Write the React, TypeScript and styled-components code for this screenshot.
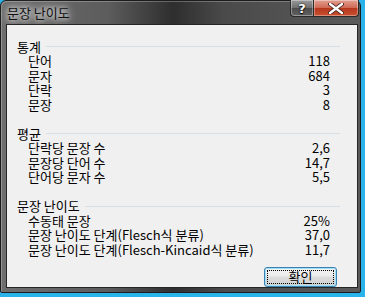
import { createGlobalStyle } from "styled-components";
import styled from "styled-components";

const GlobalStyle = createGlobalStyle`
  html, body {
    margin: 0;
    padding: 0;
    background: #2ab3ea;
    overflow: hidden;
  }
  body {
    font-family: "Noto Sans CJK KR", "Noto Sans", sans-serif;
    font-size: 13px;
  }
`;

type Row = { label: string; value: string };
type Section = { title: string; rows: Row[] };

const sections: Section[] = [
  {
    title: "통계",
    rows: [
      { label: "단어", value: "118" },
      { label: "문자", value: "684" },
      { label: "단락", value: "3" },
      { label: "문장", value: "8" },
    ],
  },
  {
    title: "평균",
    rows: [
      { label: "단락당 문장 수", value: "2,6" },
      { label: "문장당 단어 수", value: "14,7" },
      { label: "단어당 문자 수", value: "5,5" },
    ],
  },
  {
    title: "문장 난이도",
    rows: [
      { label: "수동태 문장", value: "25%" },
      { label: "문장 난이도 단계(Flesch식 분류)", value: "37,0" },
      { label: "문장 난이도 단계(Flesch-Kincaid식 분류)", value: "11,7" },
    ],
  },
];

const App = () => {
  return (
    <>
      <GlobalStyle />
      <Window>
        <TitleBar>
          <Title>문장 난이도</Title>
          <Controls>
            <HelpButton>?</HelpButton>
            <CloseButton>
              <svg width="16" height="11" viewBox="0 0 16 11">
                <path
                  d="M2 1 L14 10 M14 1 L2 10"
                  stroke="#3a1a12"
                  strokeWidth="4"
                  strokeLinecap="round"
                />
                <path
                  d="M2 1 L14 10 M14 1 L2 10"
                  stroke="#ffffff"
                  strokeWidth="2.4"
                  strokeLinecap="round"
                />
              </svg>
            </CloseButton>
          </Controls>
        </TitleBar>
        <Client>
          {sections.map((s, i) => (
            <Group key={s.title} $last={i === sections.length - 1}>
              <Header>
                <span>{s.title}</span>
                <HeaderLine />
              </Header>
              {s.rows.map((r) => (
                <StatRow key={r.label}>
                  <span>{r.label}</span>
                  <span>{r.value}</span>
                </StatRow>
              ))}
            </Group>
          ))}
          <Footer>
            <OkButton>
              <Focus>확인</Focus>
            </OkButton>
          </Footer>
        </Client>
      </Window>
    </>
  );
};

const Window = styled.div`
  width: 361px;
  height: 293px;
  box-sizing: border-box;
  display: flex;
  flex-direction: column;
  border: 1px solid #1c1c1c;
  border-radius: 6px 6px 2px 2px;
  background: linear-gradient(
    90deg,
    #6e6e6e 0%,
    #5c5c5c 30%,
    #2e2e2e 48%,
    #4a4a4a 62%,
    #5a5a5a 100%
  );
  box-shadow: inset 1px 1px 0 rgba(255, 255, 255, 0.25);
`;

const TitleBar = styled.div`
  height: 25px;
  display: flex;
  align-items: flex-start;
  justify-content: space-between;
  padding-left: 6px;
`;

const Title = styled.div`
  margin-top: 4px;
  color: #111;
  font-size: 13px;
  line-height: 16px;
  text-shadow: 0 0 4px #e8e8e8, 0 0 8px #d8d8d8, 0 0 10px #cfcfcf;
`;

const Controls = styled.div`
  display: flex;
  margin-right: 1px;
  margin-top: -1px;
`;

const CapButton = styled.div`
  height: 17px;
  box-sizing: border-box;
  border: 1px solid #2a2a2a;
  border-top: none;
  display: flex;
  align-items: center;
  justify-content: center;
  color: #fff;
  font-family: "DejaVu Sans", sans-serif;
  font-weight: bold;
  font-size: 13px;
  box-shadow: inset 0 0 0 1px rgba(255, 255, 255, 0.35);
`;

const HelpButton = styled(CapButton)`
  width: 23px;
  border-radius: 0 0 0 4px;
  border-right: none;
  background: linear-gradient(180deg, #9a9a9a 0%, #6e6e6e 50%, #4c4c4c 51%, #626262 100%);
  text-shadow: 0 0 2px #000, 0 1px 1px #000;
`;

const CloseButton = styled(CapButton)`
  width: 46px;
  border-radius: 0 0 4px 0;
  background: linear-gradient(180deg, #e2a092 0%, #d06a55 48%, #b6371e 52%, #c9502f 100%);
`;

const Client = styled.div`
  flex: 1;
  margin: 0 2px 4px 5px;
  border: 1px solid #262626;
  background: #f0f0f0;
  padding: 15px 17px 0 10px;
  display: flex;
  flex-direction: column;
  color: #000;
`;

const Group = styled.div<{ $last?: boolean }>`
  margin-bottom: ${(p) => (p.$last ? "0" : "14.5px")};
`;

const Header = styled.div`
  display: flex;
  align-items: center;
  gap: 5px;
  line-height: 14.5px;
  white-space: nowrap;
`;

const HeaderLine = styled.div`
  flex: 1;
  height: 1px;
  background: #d5dfe5;
`;

const StatRow = styled.div`
  display: flex;
  justify-content: space-between;
  line-height: 14.5px;
  padding: 0 10px 0 11px;
  white-space: nowrap;
`;

const Footer = styled.div`
  display: flex;
  justify-content: flex-end;
  padding: 10px 3px 0 0;
`;

const OkButton = styled.div`
  width: 73px;
  height: 20px;
  box-sizing: border-box;
  border: 1px solid #3c7fb1;
  border-radius: 3px;
  background: linear-gradient(180deg, #f2f2f2 0%, #ebebeb 45%, #dddddd 50%, #cfcfcf 100%);
  box-shadow: inset 0 0 0 1px #9ee0fa;
  padding: 2px;
  display: flex;
`;

const Focus = styled.div`
  flex: 1;
  border: 1px dotted #000;
  display: flex;
  align-items: center;
  justify-content: center;
  font-size: 13px;
  line-height: 12px;
`;

export default App;
